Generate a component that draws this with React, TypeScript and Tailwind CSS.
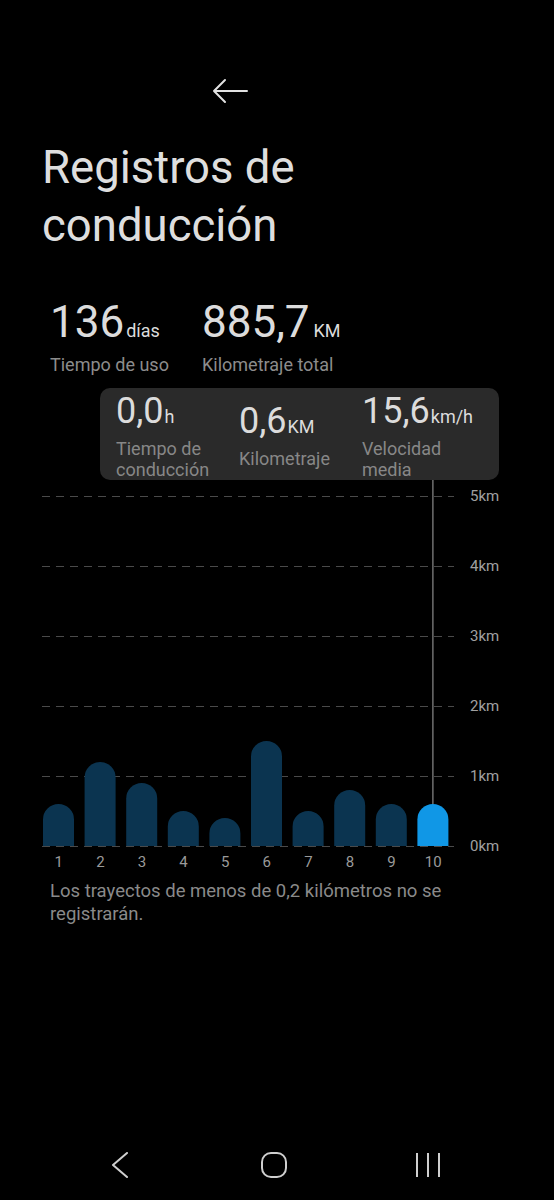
import React from 'react';

const trips = [0.6, 1.2, 0.9, 0.5, 0.4, 1.5, 0.5, 0.8, 0.6, 0.6];
const selected = 9;

const KM_PX = 70;
const BASE = 366;
const SLOT = 41.6;
const BAR_W = 31;

function BackArrow() {
  return (
    <svg width="36" height="26" viewBox="0 0 36 26" fill="none">
      <path
        d="M2 13H35M13 2L2 13L13 24"
        stroke="#e2e2e2"
        strokeWidth="2"
        strokeLinecap="round"
        strokeLinejoin="round"
      />
    </svg>
  );
}

function Chart() {
  const grid = [0, 1, 2, 3, 4, 5].map((k) => BASE - k * KM_PX);
  const selTop = BASE - trips[selected] * KM_PX;
  const selX = 5 + selected * SLOT + BAR_W / 2;

  return (
    <svg width="420" height="367" viewBox="0 0 420 367" className="block">
      {grid.map((y) => (
        <line
          key={y}
          x1="4"
          x2="416"
          y1={y + 0.5}
          y2={y + 0.5}
          stroke="#4a4a4a"
          strokeWidth="1"
          strokeDasharray="8 6"
        />
      ))}
      {trips.map((km, i) => {
        const x = 5 + i * SLOT;
        const top = BASE - km * KM_PX;
        const r = BAR_W / 2;
        return (
          <path
            key={i}
            d={`M${x} ${BASE} V${top + r} A${r} ${r} 0 0 1 ${x + BAR_W} ${top + r} V${BASE} Z`}
            fill={i === selected ? '#1097e6' : '#0b3450'}
          />
        );
      })}
      <line x1={selX} x2={selX} y1="0" y2={selTop} stroke="#8a8a8a" strokeWidth="1.2" />
    </svg>
  );
}

export default function App() {
  return (
    <div
      className="relative flex h-[1200px] w-[554px] flex-col overflow-hidden bg-black"
      style={{ fontFamily: 'Roboto, "Noto Sans", sans-serif' }}
    >
      <div className="mt-[78px] flex h-[26px] pl-[212px]">
        <BackArrow />
      </div>

      <h1 className="mt-[35px] pl-[42px] text-[45.5px] leading-[58px] font-normal text-[#dedede]">
        Registros de
        <br />
        conducción
      </h1>

      <div className="mt-[43px] flex pl-[50px]">
        <div className="w-[152px]">
          <div className="flex items-baseline text-[#dcdcdc]">
            <span className="text-[44px] leading-[48px]">136</span>
            <span className="ml-[2px] text-[18px]">días</span>
          </div>
          <div className="mt-[7px] text-[18px] leading-[24px] text-[#8c8c8c]">Tiempo de uso</div>
        </div>
        <div>
          <div className="flex items-baseline text-[#dcdcdc]">
            <span className="text-[44px] leading-[48px]">885,7</span>
            <span className="ml-[4px] text-[18px]">KM</span>
          </div>
          <div className="mt-[7px] text-[18px] leading-[24px] text-[#8c8c8c]">Kilometraje total</div>
        </div>
      </div>

      <div className="mt-[11px] ml-[100px] flex h-[92px] w-[399px] items-center rounded-[10px] bg-[#2a2a2a] pl-[16px]">
        <div className="w-[123px]">
          <div className="flex items-baseline text-[#dcdcdc]">
            <span className="text-[36px] leading-[44px]">0,0</span>
            <span className="ml-[1px] text-[18px]">h</span>
          </div>
          <div className="mt-[5px] text-[18px] leading-[21px] text-[#878787]">
            Tiempo de
            <br />
            conducción
          </div>
        </div>
        <div className="w-[123px]">
          <div className="flex items-baseline text-[#dcdcdc]">
            <span className="text-[36px] leading-[44px]">0,6</span>
            <span className="ml-[1px] text-[18px]">KM</span>
          </div>
          <div className="mt-[5px] text-[18px] leading-[21px] text-[#878787]">Kilometraje</div>
        </div>
        <div>
          <div className="flex items-baseline text-[#dcdcdc]">
            <span className="text-[36px] leading-[44px]">15,6</span>
            <span className="ml-[1px] text-[18px]">km/h</span>
          </div>
          <div className="mt-[5px] text-[18px] leading-[21px] text-[#878787]">
            Velocidad
            <br />
            media
          </div>
        </div>
      </div>

      <div className="flex pl-[38px]">
        <Chart />
        <div className="ml-[12px] flex flex-col gap-[50px] pt-[6px] text-[15px] text-[#a0a0a0]">
          {['5km', '4km', '3km', '2km', '1km', '0km'].map((l) => (
            <div key={l} className="h-[20px] leading-[20px]">
              {l}
            </div>
          ))}
        </div>
      </div>

      <div className="mt-[-4px] flex pl-[38px] text-[15px] leading-[20px] text-[#9a9a9a]">
        {trips.map((_, i) => (
          <div key={i} className="w-[41.6px] text-center">
            {i + 1}
          </div>
        ))}
      </div>

      <p className="mt-[8px] w-[480px] pl-[50px] text-[18.5px] leading-[23px] text-[#8a8a8a]">
        Los trayectos de menos de 0,2 kilómetros no se registrarán.
      </p>

      <div className="mt-auto mb-[22px] flex h-[26px] items-center pl-[111px]">
        <svg width="18" height="26" viewBox="0 0 18 26" fill="none">
          <path d="M16 1L2 13L16 25" stroke="#cfcfcf" strokeWidth="2" strokeLinecap="round" strokeLinejoin="round" />
        </svg>
        <svg width="26" height="26" viewBox="0 0 26 26" fill="none" className="ml-[132px]">
          <rect x="1" y="1" width="24" height="24" rx="9" stroke="#cfcfcf" strokeWidth="2" />
        </svg>
        <svg width="26" height="26" viewBox="0 0 26 26" fill="none" className="ml-[128px]">
          <path d="M2 1V25M13 1V25M24 1V25" stroke="#cfcfcf" strokeWidth="2" />
        </svg>
      </div>
    </div>
  );
}
